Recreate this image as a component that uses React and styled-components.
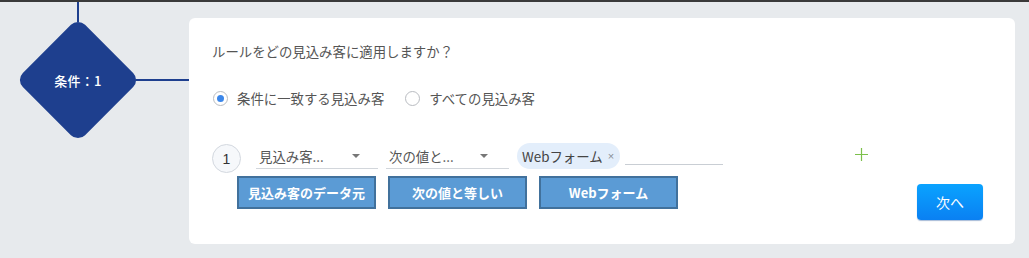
import React from "react";
import styled, { createGlobalStyle } from "styled-components";

const Global = createGlobalStyle`
  html, body { margin: 0; padding: 0; }
  body {
    background: #e7eaed;
    font-family: "Noto Sans CJK JP", "Noto Sans", "Liberation Sans", sans-serif;
    white-space: nowrap;
  }
`;

const Page = styled.div`
  width: 1029px;
  height: 258px;
  box-sizing: border-box;
  border-top: 2px solid #3a3a3a;
  background: #e7eaed;
  display: flex;
  align-items: flex-start;
  overflow: hidden;
`;

const NodeArea = styled.div`
  display: flex;
  align-items: flex-start;
  width: 189px;
  flex: none;
`;

const NodeStack = styled.div`
  margin-left: 20px;
  width: 116px;
  display: flex;
  flex-direction: column;
  align-items: center;
`;

const VLine = styled.div`
  width: 2px;
  height: 20px;
  background: #1e3f8e;
`;

const DiamondBox = styled.div`
  width: 116px;
  height: 116px;
  display: flex;
  align-items: center;
  justify-content: center;
  position: relative;
`;

const Diamond = styled.div`
  width: 88px;
  height: 88px;
  border-radius: 10px;
  background: #1e3f8e;
  transform: rotate(45deg);
  position: absolute;
`;

const DiamondLabel = styled.span`
  position: relative;
  color: #fff;
  font-size: 13px;
  font-weight: 500;
  letter-spacing: 0.3px;
`;

const HLine = styled.div`
  margin-top: 77px;
  width: 53px;
  height: 2px;
  background: #1e3f8e;
`;

const Card = styled.div`
  margin-top: 16px;
  width: 826px;
  height: 226px;
  box-sizing: border-box;
  background: #fff;
  border-radius: 6px;
  padding: 23px 32px 0 23px;
  display: flex;
  flex-direction: column;
  color: #555;
`;

const Heading = styled.div`
  font-size: 13.4px;
  line-height: 20px;
  color: #555;
`;

const RadioRow = styled.div`
  margin-top: 27px;
  display: flex;
  align-items: center;
  height: 20px;
`;

const RadioItem = styled.label`
  display: flex;
  align-items: center;
  margin-left: 1px;
  margin-right: 20px;
  font-size: 13.4px;
  color: #555;
`;

const RadioCircle = styled.span`
  width: 13px;
  height: 13px;
  border: 1px solid #b9bcc1;
  border-radius: 50%;
  background: #fff;
  display: flex;
  align-items: center;
  justify-content: center;
  margin-right: 9px;
  box-sizing: content-box;
  &::after {
    content: "";
    width: 7px;
    height: 7px;
    border-radius: 50%;
    background: ${(p) => (p.$checked ? "#3b87ea" : "transparent")};
  }
`;

const CondRow = styled.div`
  margin-top: 35px;
  display: flex;
  align-items: flex-start;
  height: 30px;
`;

const Num = styled.div`
  margin-top: 1px;
  width: 27px;
  height: 27px;
  border: 1px solid #d3d8df;
  border-radius: 50%;
  background: #f6f8fb;
  display: flex;
  align-items: center;
  justify-content: center;
  font-size: 14px;
  color: #333;
  font-family: "Liberation Sans", sans-serif;
  flex: none;
`;

const Select = styled.div`
  margin-left: ${(p) => p.$ml}px;
  width: ${(p) => p.$w}px;
  height: 26px;
  border-bottom: 1px solid #d2d6db;
  display: flex;
  align-items: center;
  padding-left: 3px;
  box-sizing: border-box;
  font-size: 13.4px;
  color: #555;
  position: relative;
  flex: none;
`;

const Caret = styled.span`
  position: absolute;
  left: ${(p) => p.$x}px;
  top: 11px;
  width: 0;
  height: 0;
  border-left: 4px solid transparent;
  border-right: 4px solid transparent;
  border-top: 4px solid #777;
`;

const Chip = styled.div`
  margin-left: 8px;
  height: 26px;
  box-sizing: border-box;
  border-radius: 13px;
  background: #e3eefb;
  display: flex;
  align-items: center;
  padding: 0 6px 0 5px;
  font-size: 13.4px;
  color: #444;
  flex: none;
`;

const ChipX = styled.span`
  margin-left: 5px;
  font-size: 11px;
  color: #8a8f96;
  font-family: "Liberation Sans", sans-serif;
`;

const TextInput = styled.div`
  margin-left: 5px;
  width: 98px;
  height: 21px;
  border-bottom: 1px solid #c9ced4;
  flex: none;
`;

const Plus = styled.svg`
  margin-left: 132px;
  margin-top: 5px;
  flex: none;
`;

const BottomRow = styled.div`
  margin-top: 3px;
  display: flex;
  align-items: flex-start;
`;

const Tags = styled.div`
  margin-left: 25px;
  display: flex;
  gap: 12px;
`;

const TagButton = styled.div`
  width: 139px;
  height: 33px;
  box-sizing: border-box;
  background: #5b9bd5;
  border: 2px solid #41719c;
  display: flex;
  align-items: center;
  justify-content: center;
  color: #fff;
  font-weight: 700;
  font-size: 13px;
`;

const NextButton = styled.button`
  margin-left: auto;
  margin-top: 8px;
  width: 66px;
  height: 36px;
  border: none;
  border-radius: 4px;
  background: linear-gradient(#0aa3ff, #0a80f2);
  box-shadow: 0 1px 1px rgba(0, 60, 140, 0.35);
  color: #fff;
  font-size: 14px;
  font-family: "Noto Sans CJK JP", sans-serif;
  padding: 0;
`;

export default function App() {
  return (
    <>
      <Global />
      <Page>
        <NodeArea>
          <NodeStack>
            <VLine />
            <DiamondBox>
              <Diamond />
              <DiamondLabel>条件：1</DiamondLabel>
            </DiamondBox>
          </NodeStack>
          <HLine />
        </NodeArea>
        <Card>
          <Heading>ルールをどの見込み客に適用しますか？</Heading>
          <RadioRow>
            <RadioItem>
              <RadioCircle $checked />
              条件に一致する見込み客
            </RadioItem>
            <RadioItem>
              <RadioCircle />
              すべての見込み客
            </RadioItem>
          </RadioRow>
          <CondRow>
            <Num>1</Num>
            <Select $ml={15} $w={122}>
              見込み客...
              <Caret $x={96} />
            </Select>
            <Select $ml={8} $w={123}>
              次の値と...
              <Caret $x={94} />
            </Select>
            <Chip>
              Webフォーム<ChipX>×</ChipX>
            </Chip>
            <TextInput />
            <Plus width="13" height="13" viewBox="0 0 13 13">
              <path d="M6.5 0V13M0 6.5H13" stroke="#7cc04b" strokeWidth="1.2" />
            </Plus>
          </CondRow>
          <BottomRow>
            <Tags>
              <TagButton>見込み客のデータ元</TagButton>
              <TagButton>次の値と等しい</TagButton>
              <TagButton>Webフォーム</TagButton>
            </Tags>
            <NextButton>次へ</NextButton>
          </BottomRow>
        </Card>
      </Page>
    </>
  );
}
